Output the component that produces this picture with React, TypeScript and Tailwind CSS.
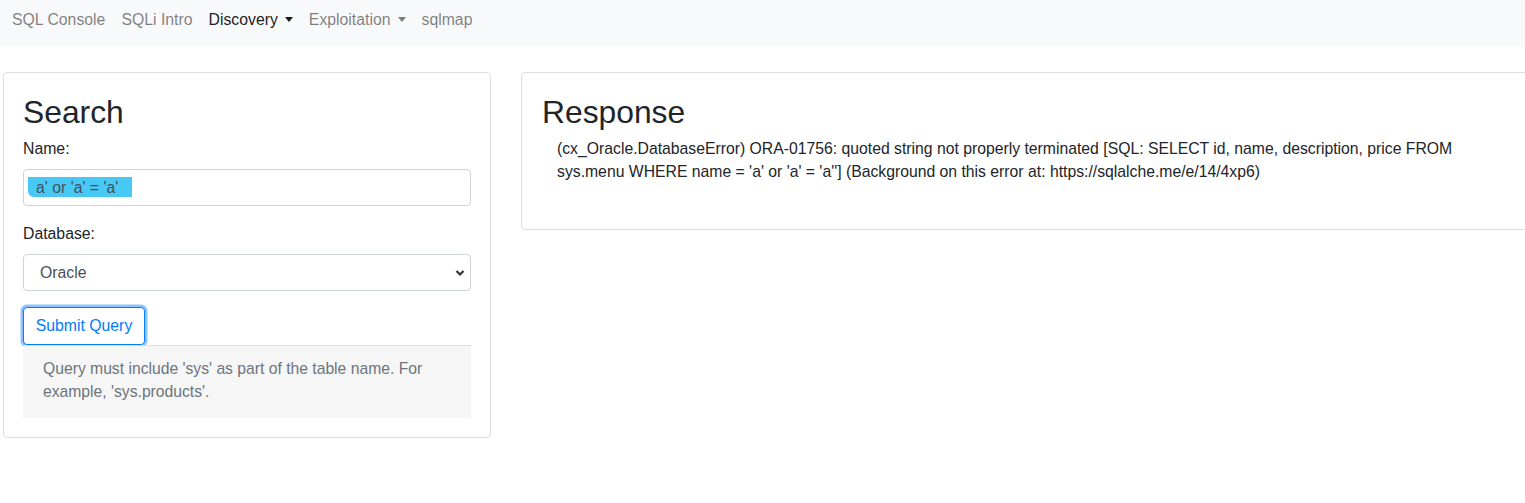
import React from "react";

const font = { fontFamily: '"Liberation Sans", Arial, sans-serif' };

function Caret() {
  return (
    <span className="ml-[7px] inline-block h-0 w-0 border-x-[4.5px] border-t-[5px] border-x-transparent border-t-current align-[3px]" />
  );
}

export default function App() {
  return (
    <div className="h-[503px] w-[1525px] overflow-hidden bg-white text-[#212529]" style={font}>
      <nav className="flex h-[47px] items-start bg-[#f8f9fa] pl-1 pt-[8px] text-[15.8px] leading-[23px]">
        <a className="px-2 text-[rgba(0,0,0,0.5)]">SQL Console</a>
        <a className="px-2 text-[rgba(0,0,0,0.5)]">SQLi Intro</a>
        <a className="px-2 text-[rgba(0,0,0,0.9)]">
          Discovery
          <Caret />
        </a>
        <a className="px-2 text-[rgba(0,0,0,0.5)]">
          Exploitation
          <Caret />
        </a>
        <a className="px-2 text-[rgba(0,0,0,0.5)]">sqlmap</a>
      </nav>

      <div className="mt-[25px] flex items-start gap-[30px] pl-[3px]">
        {/* Search card */}
        <div className="w-[488px] flex-none rounded-[4px] border border-[#dcdfe2] px-[19px] pt-[20px] pb-[19px]">
          <h2 className="mb-[6px] text-[31.8px] leading-[38px] font-normal">Search</h2>
          <label className="block text-[15.8px] leading-[24px]">Name:</label>
          <div className="relative mt-[8px] flex h-[37px] items-center rounded-[4px] border border-[#ced4da] px-[12px] text-[15.8px] text-[#495057]">
            <div className="absolute left-[4px] top-[7px] h-[20px] w-[104px] rounded-bl-[6px] bg-[#48c8f4]" />
            <span className="relative">a' or 'a' = 'a'</span>
          </div>
          <label className="mt-[16px] block text-[15.8px] leading-[24px]">Database:</label>
          <div className="mt-[8px] flex h-[37px] items-center justify-between rounded-[4px] border border-[#ced4da] pl-[16px] pr-[5px] text-[15.8px] text-[#495057]">
            <span>Oracle</span>
            <svg width="10" height="8" viewBox="0 0 10 8" className="text-[#333]">
              <path d="M1.5 2 L5 5.5 L8.5 2" fill="none" stroke="currentColor" strokeWidth="2.2" />
            </svg>
          </div>
          <button className="mt-[16px] flex h-[38px] w-[122px] items-center justify-center rounded-[4px] border border-[#007bff] bg-white text-[15.8px] text-[#007bff] shadow-[0_0_0_2.5px_rgba(0,123,255,0.45)]">
            Submit Query
          </button>
          <div className="border-t border-[#dcdfe2] bg-[#f6f6f6] px-[20px] pt-[12px] pb-[15px] text-[15.7px] leading-[22.5px] text-[#6c757d]">
            Query must include 'sys' as part of the table name. For example, 'sys.products'.
          </div>
        </div>

        {/* Response card */}
        <div className="h-[158px] w-[1040px] flex-none rounded-[4px] border border-[#dcdfe2] px-[20px] pt-[20px]">
          <h2 className="mb-[6px] text-[31.8px] leading-[38px] font-normal">Response</h2>
          <p className="w-[935px] pl-[15px] text-[15.75px] leading-[23px]">
            (cx_Oracle.DatabaseError) ORA-01756: quoted string not properly terminated [SQL: SELECT id, name, description, price FROM sys.menu WHERE name = 'a' or 'a' = 'a''] (Background on this error at: https://sqlalche.me/e/14/4xp6)
          </p>
        </div>
      </div>
    </div>
  );
}
